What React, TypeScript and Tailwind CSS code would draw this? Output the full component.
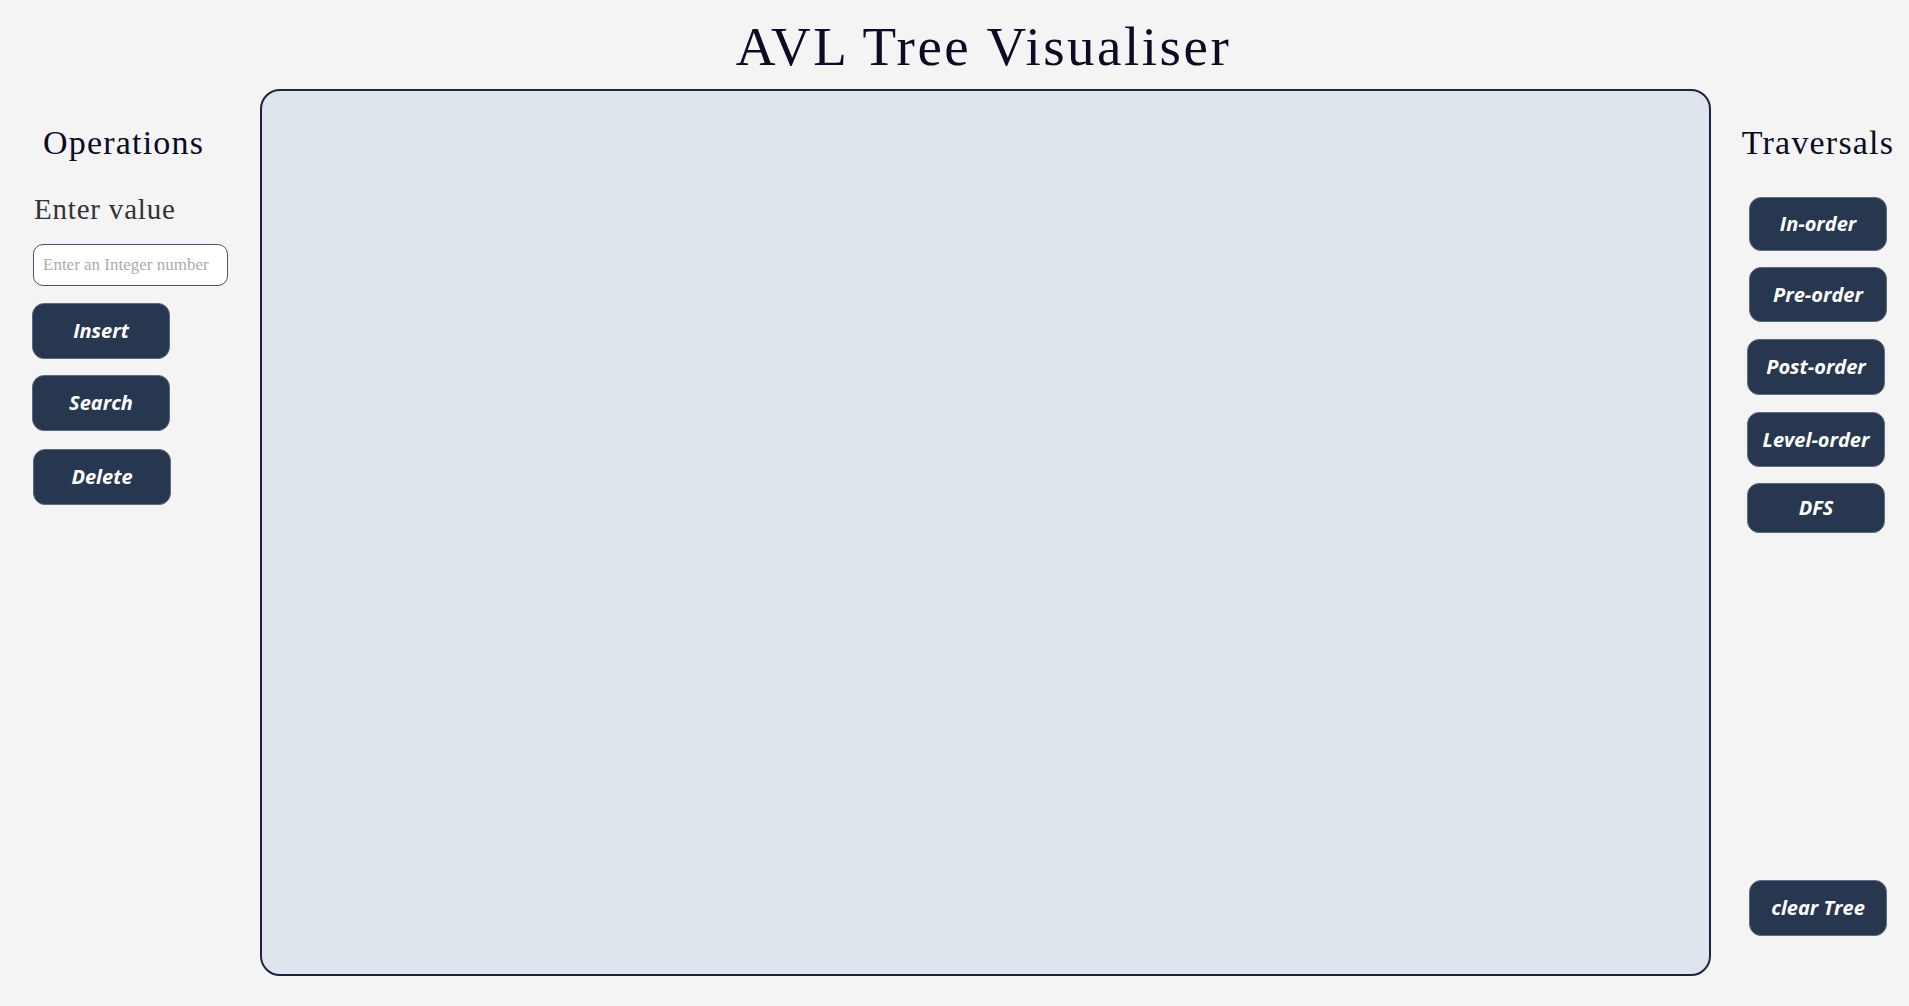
const serif = "font-['Liberation_Serif',serif]";

const btn =
  "flex items-center justify-center w-[138px] rounded-[12px] bg-[#283750] border border-[#5f6a7d] text-white text-[20px] font-bold italic font-['Open_Sans',sans-serif] leading-none";

export default function App() {
  return (
    <div className="min-h-screen w-full bg-[#f4f4f4] flex flex-col">
      <header className="pt-[19px] mb-[15px] flex justify-center">
        <h1 className={`${serif} text-[55px] tracking-[2.5px] leading-none text-[#0b0b24] pl-[58px]`}>
          AVL Tree Visualiser
        </h1>
      </header>

      <div className="flex h-[887px]">
        {/* operations */}
        <aside className="w-[260px] shrink-0 flex flex-col">
          <h2 className={`${serif} mt-[37px] pl-[43px] text-[34px] tracking-[1.2px] leading-none text-[#0b0b24]`}>
            Operations
          </h2>
          <label className={`${serif} mt-[35px] pl-[34px] text-[29px] tracking-[0.8px] leading-none text-[#333]`}>
            Enter value
          </label>
          <input
            type="text"
            placeholder="Enter an Integer number"
            className={`${serif} ml-[33px] mt-[20px] w-[195px] h-[42px] rounded-[10px] border border-[#4b5366] bg-white px-[9px] text-[17px] placeholder:text-[#b0aaaa] outline-none`}
          />
          <button className={`${btn} ml-[32px] mt-[17px] h-[56px]`}>Insert</button>
          <button className={`${btn} ml-[32px] mt-[16px] h-[56px]`}>Search</button>
          <button className={`${btn} ml-[33px] mt-[18px] h-[56px]`}>Delete</button>
        </aside>

        {/* canvas */}
        <main className="w-[1451px] shrink-0 rounded-[20px] border-2 border-[#22213f] bg-[#dfe5ec]" />

        {/* traversals */}
        <aside className="flex-1 flex flex-col items-center pl-[16px]">
          <h2 className={`${serif} mt-[37px] text-[34px] tracking-[1.2px] leading-none text-[#0b0b24]`}>
            Traversals
          </h2>
          <button className={`${btn} mt-[37px] h-[54px]`}>In-order</button>
          <button className={`${btn} mt-[16px] h-[55px]`}>Pre-order</button>
          <button className={`${btn} mt-[17px] h-[56px] -ml-[4px]`}>Post-order</button>
          <button className={`${btn} mt-[17px] h-[55px] -ml-[4px]`}>Level-order</button>
          <button className={`${btn} mt-[16px] h-[50px] -ml-[4px]`}>DFS</button>
          <button className={`${btn} mt-auto mb-[40px] h-[56px]`}>clear Tree</button>
        </aside>
      </div>
    </div>
  );
}
